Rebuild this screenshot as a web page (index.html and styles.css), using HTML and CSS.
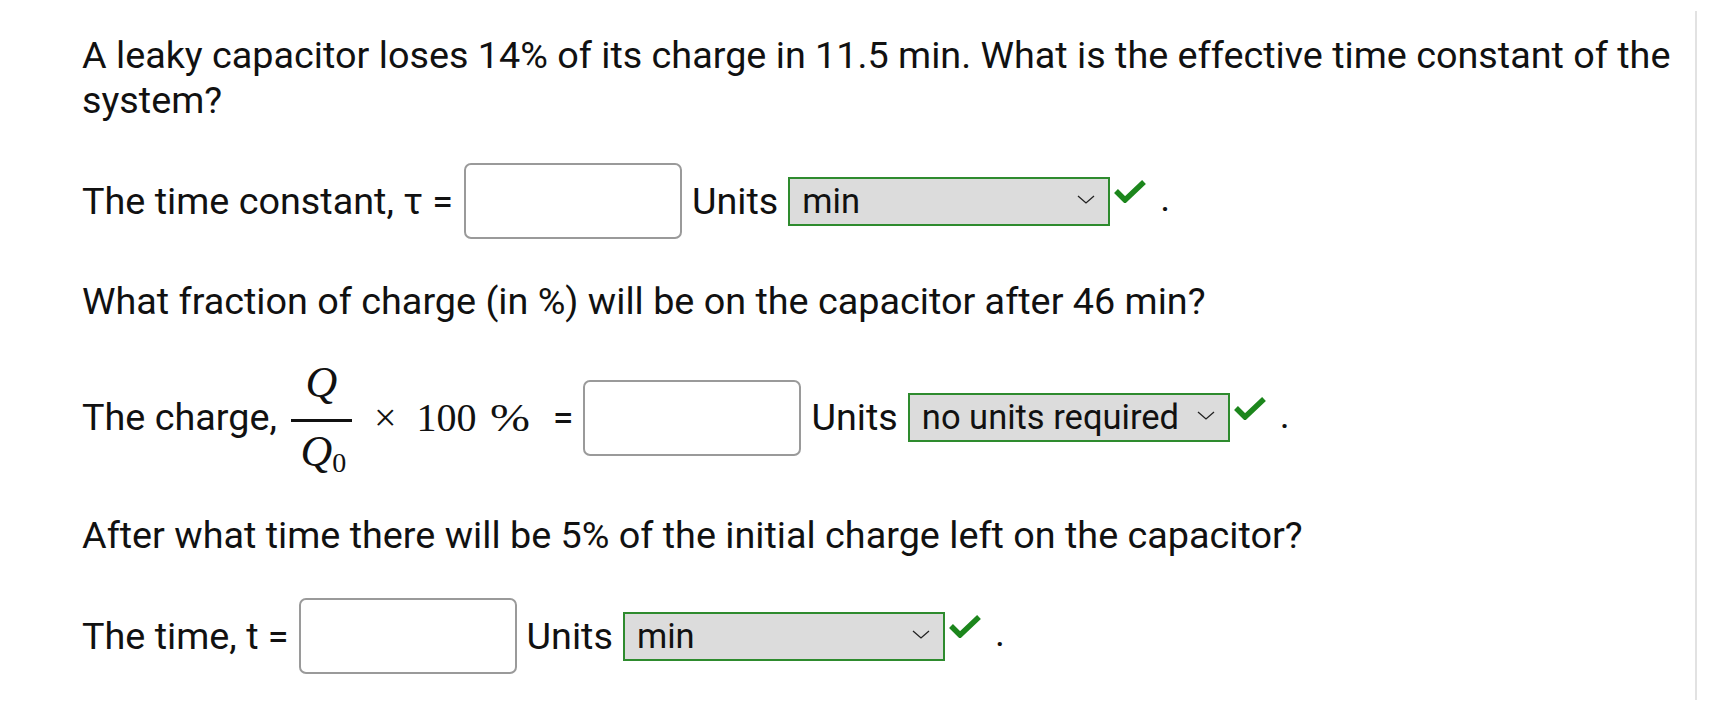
FILE: index.html
```html
<!DOCTYPE html>
<html lang="en">
<head>
<meta charset="utf-8">
<title>Leaky capacitor</title>
<link rel="stylesheet" href="styles.css">
</head>
<body>
<div class="page">
  <main class="panel">
    <p class="question q1">A leaky capacitor loses 14% of its charge in 11.5 min. What is the effective time constant of the system?</p>

    <div class="row row1">
      <span class="label">The time constant, τ =</span>
      <input class="answer" type="text" aria-label="time constant">
      <span class="units">Units</span>
      <div class="select"><span class="sel-text">min</span><svg class="chev" viewBox="0 0 18 9" width="18" height="9"><polyline points="1,1 9,8 17,1" fill="none" stroke="#222" stroke-width="1.3"/></svg></div>
      <svg class="check" viewBox="0 0 32 24" width="32" height="24"><polyline points="2,12 11,21 30,3" fill="none" stroke="#1c861c" stroke-width="5.5"/></svg>
      <span class="dot">.</span>
    </div>

    <p class="question q2">What fraction of charge (in %) will be on the capacitor after 46 min?</p>

    <div class="row row2">
      <span class="label">The charge,</span>
      <span class="math">
        <span class="frac"><span class="num">Q</span><span class="bar"></span><span class="den">Q<span class="sub">0</span></span></span>
        <span class="times">×</span><span class="hundred">100</span><span class="pct">%</span>
      </span>
      <span class="eq">=</span>
      <input class="answer" type="text" aria-label="charge fraction">
      <span class="units">Units</span>
      <div class="select"><span class="sel-text">no units required</span><svg class="chev" viewBox="0 0 18 9" width="18" height="9"><polyline points="1,1 9,8 17,1" fill="none" stroke="#222" stroke-width="1.3"/></svg></div>
      <svg class="check" viewBox="0 0 32 24" width="32" height="24"><polyline points="2,12 11,21 30,3" fill="none" stroke="#1c861c" stroke-width="5.5"/></svg>
      <span class="dot">.</span>
    </div>

    <p class="question q3">After what time there will be 5% of the initial charge left on the capacitor?</p>

    <div class="row row3">
      <span class="label">The time, t =</span>
      <input class="answer" type="text" aria-label="time">
      <span class="units">Units</span>
      <div class="select"><span class="sel-text">min</span><svg class="chev" viewBox="0 0 18 9" width="18" height="9"><polyline points="1,1 9,8 17,1" fill="none" stroke="#222" stroke-width="1.3"/></svg></div>
      <svg class="check" viewBox="0 0 32 24" width="32" height="24"><polyline points="2,12 11,21 30,3" fill="none" stroke="#1c861c" stroke-width="5.5"/></svg>
      <span class="dot">.</span>
    </div>
  </main>
</div>
</body>
</html>
```

FILE: styles.css
```css
html, body {
  margin: 0;
  padding: 0;
  background: #ffffff;
}

body {
  font-family: Roboto, "Liberation Sans", sans-serif;
  font-size: 37.75px;
  line-height: 45px;
  color: #111111;
}

.page {
  padding-top: 11px;
}

.panel {
  display: block;
  width: 1697px;
  height: 689px;
  box-sizing: border-box;
  border-right: 2px solid #e2e2e2;
  padding: 22px 8px 0 82px;
}

.question {
  margin: 0;
}

.row {
  display: flex;
  align-items: center;
}

.row1 { margin-top: 40px; }
.q2 { margin-top: 40px; }
.row2 { margin-top: 39px; }
.q3 { margin-top: 41px; }
.row3 { margin-top: 40px; }

.label {
  white-space: nowrap;
}

.answer {
  width: 218px;
  height: 76px;
  box-sizing: border-box;
  border: 2px solid #9a9a9a;
  border-radius: 7px;
  margin: 0 10px 0 11px;
  padding: 0 10px;
  font: inherit;
  background: #fff;
}

.row2 .answer { margin-left: 10px; }
.row3 .answer { margin-left: 10px; }

.units {
  margin-right: 10px;
}

.select {
  width: 322px;
  height: 49px;
  box-sizing: border-box;
  border: 2px solid #2e8b2e;
  background: #dcdcdc;
  display: flex;
  align-items: center;
  justify-content: space-between;
  padding: 0 13px 0 12px;
  font-size: 34.5px;
}

.sel-text {
  white-space: nowrap;
}

.chev {
  display: block;
  margin-top: -4px;
}

.check {
  margin: -20px 0 0 4px;
  display: block;
}

.dot {
  margin-left: 14px;
  margin-bottom: 5px;
}

.math {
  display: inline-flex;
  align-items: center;
  font-family: "Liberation Serif", "DejaVu Serif", serif;
  font-size: 40px;
  margin-left: 14px;
}

.frac {
  display: inline-flex;
  flex-direction: column;
  align-items: center;
  width: 61px;
}

.num, .den {
  font-style: italic;
  font-size: 44px;
  line-height: 40px;
  height: 40px;
}

.den {
  margin-left: 4px;
}

.den .sub {
  font-style: normal;
  font-size: 28px;
  position: relative;
  top: 6px;
}

.bar {
  width: 61px;
  height: 3px;
  background: #111111;
  margin: 16px 0 10px;
}

.times {
  margin-left: 22px;
}

.hundred {
  margin-left: 20px;
  white-space: nowrap;
}

.pct {
  display: inline-block;
  margin-left: 14px;
  transform: scaleX(1.2);
  transform-origin: left center;
}

.eq {
  margin-left: 29px;
}
```
